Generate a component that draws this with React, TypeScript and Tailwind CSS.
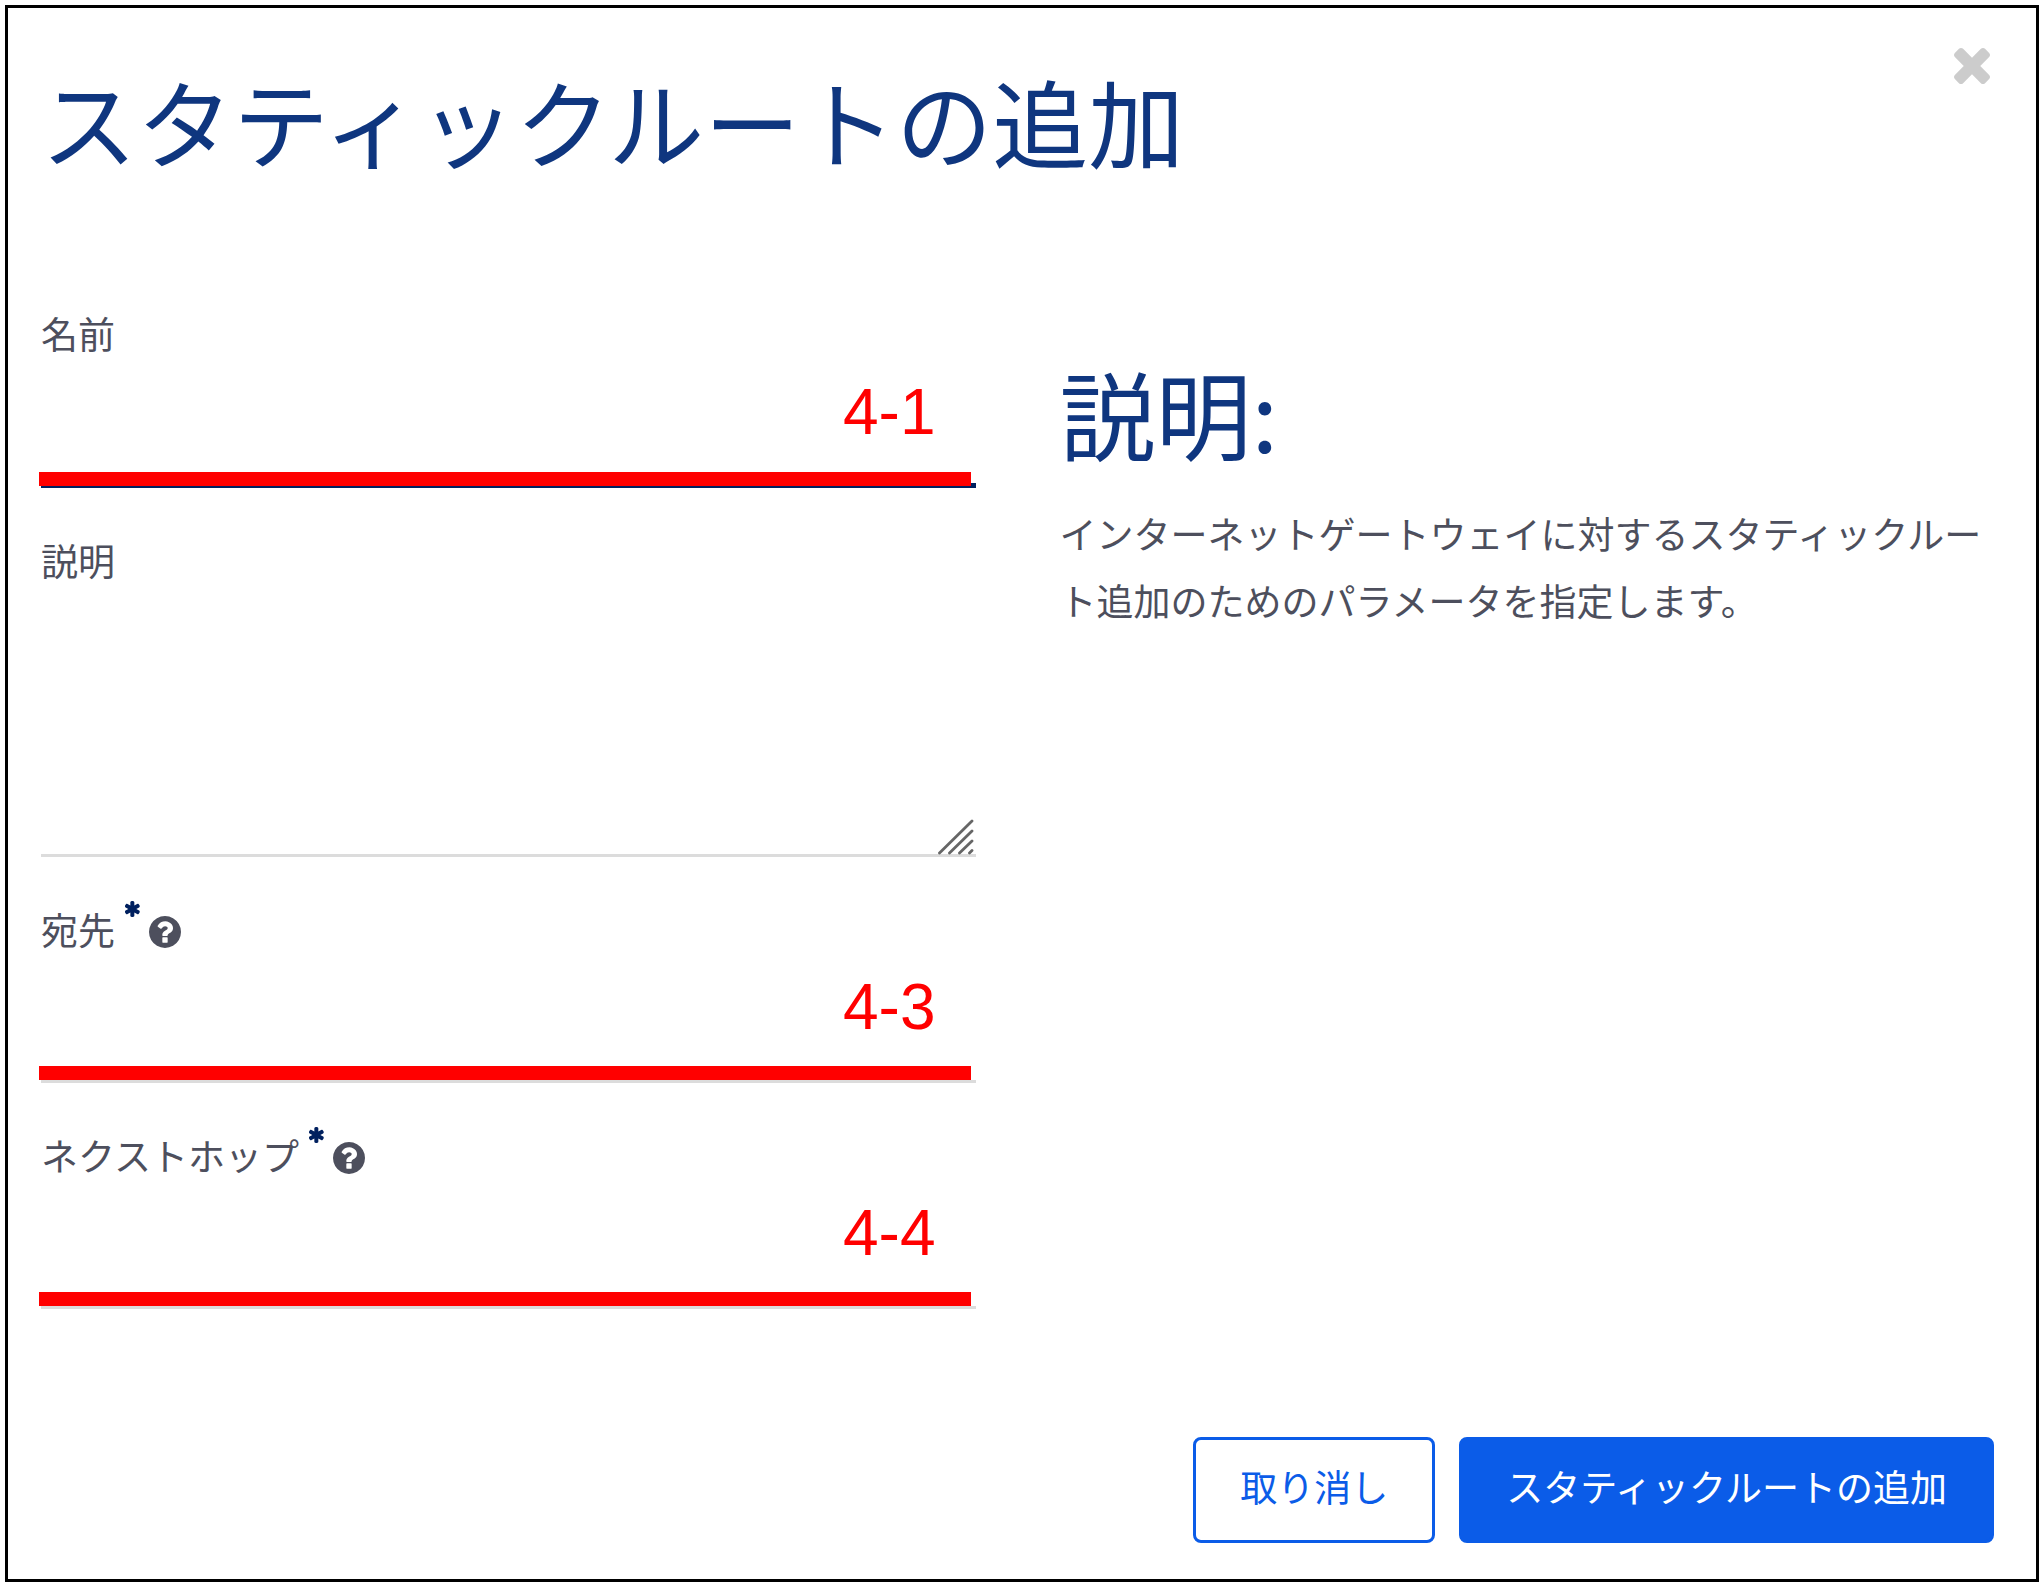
import React from "react";

type IconProps = { className?: string };

function CloseIcon({ className }: IconProps) {
  return (
    <svg viewBox="302 366 1188 1188" fill="currentColor" className={className} aria-hidden="true">
      <path d="M1490 1322q0 40-28 68l-136 136q-28 28-68 28t-68-28l-294-294-294 294q-28 28-68 28t-68-28l-136-136q-28-28-28-68t28-68l294-294-294-294q-28-28-28-68t28-68l136-136q28-28 68-28t68 28l294 294 294-294q28-28 68-28t68 28l136 136q28 28 28 68t-28 68l-294 294 294 294q28 28 28 68z" />
    </svg>
  );
}

function AsteriskIcon({ className }: IconProps) {
  return (
    <svg viewBox="128 128 1536 1536" fill="currentColor" className={className} aria-hidden="true">
      <path d="M1482 1050q46 26 59.500 77.500t-12.500 97.500l-64 110q-26 46-77.500 59.500t-97.500-12.500l-266-153v307q0 52-38 90t-90 38h-128q-52 0-90-38t-38-90v-307l-266 153q-46 26-97.500 12.500t-77.500-59.500l-64-110q-26-46-12.500-97.500t59.500-77.500l266-154-266-154q-46-26-59.500-77.500t12.500-97.500l64-110q26-46 77.500-59.500t97.500 12.500l266 153v-307q0-52 38-90t90-38h128q52 0 90 38t38 90v307l266-153q46-26 97.500-12.500t77.500 59.500l64 110q26 46 12.500 97.500t-59.500 77.500l-266 154z" />
    </svg>
  );
}

function HelpIcon({ className }: IconProps) {
  return (
    <svg viewBox="128 128 1536 1536" fill="currentColor" className={className} aria-hidden="true">
      <path d="M1024 1376v-192q0-14-9-23t-23-9h-192q-14 0-23 9t-9 23v192q0 14 9 23t23 9h192q14 0 23-9t9-23zm256-672q0-88-55.500-163t-138.500-116-170-41q-243 0-371 213-15 24 8 42l132 100q7 6 19 6 16 0 25-12 53-68 86-92 34-24 86-24 48 0 85.500 26t37.500 59q0 38-20 61t-68 45q-63 28-115.500 86.500t-52.500 125.500v36q0 14 9 23t23 9h192q14 0 23-9t9-23q0-19 21.500-49.500t54.500-49.500q32-18 49-28.500t46-35 44.500-48 28-60.500 12.500-81zm384 192q0 209-103 385.500t-279.500 279.500-385.500 103-385.500-103-279.500-279.500-103-385.500 103-385.500 279.500-279.500 385.500-103 385.500 103 279.500 279.500 103 385.500z" />
    </svg>
  );
}

function ResizeGrip({ className }: IconProps) {
  return (
    <svg viewBox="0 0 36 36" className={className} stroke="#666666" strokeWidth="2.8" strokeLinecap="round" aria-hidden="true">
      <path d="M1.500 34 34 2M11.500 34 34 12M21.500 34 34 22M31.500 34 34 31.500" />
    </svg>
  );
}

type FieldProps = {
  id: string;
  label: string;
  required?: boolean;
  mark?: string;
  multiline?: boolean;
  active?: boolean;
};

function Field({ id, label, required, mark, multiline, active }: FieldProps) {
  return (
    <div>
      <div className="flex h-16 items-center">
        <label htmlFor={id} className="self-start text-[37px] leading-[58px]">
          {label}
        </label>
        {required && (
          <>
            <AsteriskIcon className="ml-2.5 mt-px size-4 self-start text-[#00205f]" />
            <button type="button" aria-label={`${label}のヘルプ`} className="ml-2">
              <HelpIcon className="size-8" />
            </button>
          </>
        )}
      </div>
      <div className="relative">
        {multiline ? (
          <>
            <textarea
              id={id}
              className="block h-[262px] w-full resize-none border-b-[3px] border-[#dcdcdc] bg-transparent text-[37px] outline-none"
            />
            <ResizeGrip className="pointer-events-none absolute right-[2px] bottom-[2px] size-9" />
          </>
        ) : (
          <input
            id={id}
            type="text"
            className={
              active
                ? "block h-[120px] w-full border-b-[5px] border-[#00205f] bg-transparent text-[37px] outline-none"
                : "block h-[119px] w-full border-b-[3px] border-[#dcdcdc] bg-transparent text-[37px] outline-none"
            }
          />
        )}
        {mark && (
          <>
            <span className="pointer-events-none absolute right-10 bottom-11 font-['Liberation_Sans',Arial,sans-serif] text-[64px] leading-none text-[#ff0000]">
              {mark}
            </span>
            <span
              className={
                active
                  ? "pointer-events-none absolute right-[5px] -left-0.5 bottom-[2px] h-3.5 bg-[#ff0000]"
                  : "pointer-events-none absolute right-[5px] -left-0.5 bottom-[3px] h-3.5 bg-[#ff0000]"
              }
            />
          </>
        )}
      </div>
    </div>
  );
}

export default function App() {
  return (
    <div className="flex min-h-screen flex-col bg-white px-[5px] pt-[5px] pb-[3px] font-['Noto_Sans_CJK_JP',sans-serif] text-[#4d4f5d]">
      <main className="flex flex-1 flex-col border-[3px] border-black pr-[42px] pb-9 pl-[33px]">
        <header className="flex items-start justify-between pt-10">
          <h1 className="pt-0.5 text-[96px] leading-[140px] text-[#0f367f]">スタティックルートの追加</h1>
          <button type="button" aria-label="閉じる" className="mr-1 text-[#cccccc]">
            <CloseIcon className="size-9" />
          </button>
        </header>

        <form className="flex flex-1 flex-col pt-[114px]">
          <div className="grid grid-cols-2 gap-[84px]">
            <div className="flex flex-col gap-[43px]">
              <Field id="name" label="名前" mark="4-1" active />
              <Field id="description" label="説明" multiline />
              <Field id="destination" label="宛先" mark="4-3" required />
              <Field id="nexthop" label="ネクストホップ" mark="4-4" required />
            </div>
            <section className="pt-[38px]">
              <h2 className="text-[96px] leading-[140px] text-[#0f367f]">説明:</h2>
              <p className="pt-[18px] text-[37px] leading-[67px]">
                インターネットゲートウェイに対するスタティックルート追加のためのパラメータを指定します。
              </p>
            </section>
          </div>

          <div className="mt-auto flex justify-end gap-6 pt-10">
            <button
              type="button"
              className="h-[106px] rounded-lg border-[3px] border-[#0b5ce8] px-11 pb-1.5 text-[37px] text-[#0b5ce8]"
            >
              取り消し
            </button>
            <button
              type="submit"
              className="h-[106px] rounded-lg border-[3px] border-[#0b5ce8] bg-[#0b5ce8] px-11 pb-1.5 text-[37px] text-white"
            >
              スタティックルートの追加
            </button>
          </div>
        </form>
      </main>
    </div>
  );
}
